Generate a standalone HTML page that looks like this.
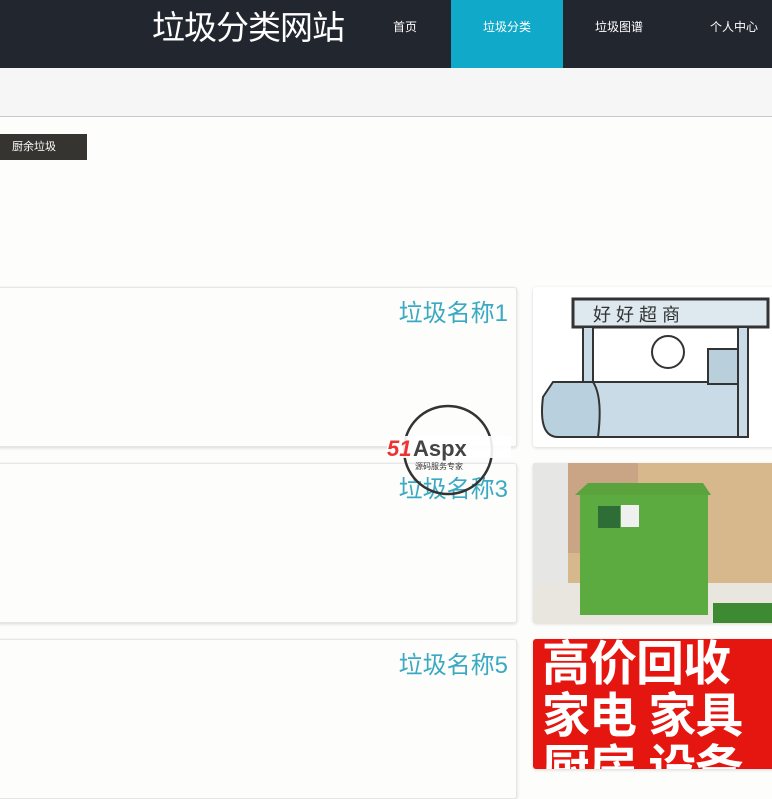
<!DOCTYPE html>
<html><head><meta charset="utf-8"><style>
*{margin:0;padding:0;box-sizing:border-box}
body{width:772px;height:763px;overflow:hidden;background:#fdfdfc;font-family:"Liberation Sans","Noto Sans CJK SC",sans-serif;position:relative}
.hd{position:absolute;left:0;top:0;width:772px;height:68px;background:#22262e}
.t{position:absolute;left:152px;top:6px;color:#fff;font-size:33px;line-height:44px;letter-spacing:-1px}
.n{position:absolute;top:0;height:68px;line-height:54px;color:#fff;font-size:12px}
.act{left:451px;width:112px;background:#10a9c9;text-align:center}
.band{position:absolute;left:0;top:68px;width:772px;height:49px;background:#f6f6f6;border-bottom:1px solid #c8c8c8}
.btn{position:absolute;left:0;top:134px;width:87px;height:26px;background:#353431;color:#fff;font-size:11px;line-height:26px;padding-left:12px}
.card{position:absolute;left:-10px;width:527px;height:160px;background:#fdfdfc;border:1px solid #e6e6e6;box-shadow:0 1px 3px rgba(0,0,0,.15);border-radius:3px}
.card span{position:absolute;right:8px;top:5px;color:#3aa9c2;font-size:24px}
.img{position:absolute;left:533px;width:245px;height:160px;border-radius:3px;overflow:hidden;box-shadow:0 1px 3px rgba(0,0,0,.15)}
.red{background:#e5150f;color:#fff;font-weight:bold;font-size:48px;line-height:52px;padding:0 0 0 9px;white-space:nowrap;letter-spacing:-1px}
</style></head><body>
<div class="hd">
<div class="t">垃圾分类网站</div>
<div class="n" style="left:393px">首页</div>
<div class="n act">垃圾分类</div>
<div class="n" style="left:595px">垃圾图谱</div>
<div class="n" style="left:710px">个人中心</div>
</div>
<div class="band"></div>
<div class="btn">厨余垃圾</div>
<div class="card" style="top:287px"><span>垃圾名称1</span></div>
<div class="card" style="top:463px"><span>垃圾名称3</span></div>
<div class="card" style="top:639px"><span>垃圾名称5</span></div>
<div class="img" style="top:287px;background:#fff">
<svg width="245" height="160" viewBox="0 0 245 160">
<rect x="40" y="12" width="195" height="28" fill="#dde8ef" stroke="#333" stroke-width="3"/>
<text x="60" y="34" font-size="18" fill="#333">好 好 超 商</text>
<rect x="50" y="40" width="10" height="100" fill="#c9dbe6" stroke="#333" stroke-width="2"/>
<rect x="205" y="40" width="10" height="110" fill="#c9dbe6" stroke="#333" stroke-width="2"/>
<rect x="60" y="95" width="145" height="55" fill="#c9dbe6" stroke="#333" stroke-width="2"/>
<circle cx="135" cy="65" r="16" fill="#fff" stroke="#333" stroke-width="2"/>
<rect x="175" y="62" width="30" height="35" fill="#b9cfdc" stroke="#333" stroke-width="2"/>
<path d="M10 110 Q5 150 25 150 L65 150 Q70 110 60 95 L20 95 Z" fill="#b9d0de" stroke="#333" stroke-width="2"/>
</svg></div>
<div class="img" style="top:463px;background:#d7b88c">
<svg width="245" height="160" viewBox="0 0 245 160">
<rect x="0" y="0" width="35" height="160" fill="#e6e6e4"/>
<rect x="35" y="0" width="70" height="90" fill="#c9a585"/>
<rect x="0" y="120" width="245" height="40" fill="#e9e6df"/>
<rect x="180" y="140" width="65" height="20" fill="#3d8a32"/>
<path d="M42 32 L55 20 L170 20 L178 32 Z" fill="#5aa33d"/>
<rect x="47" y="32" width="128" height="120" fill="#5cab41"/>
<rect x="65" y="43" width="22" height="22" fill="#2e6e36"/>
<rect x="88" y="42" width="18" height="22" fill="#f0f0f0"/>
</svg></div>
<div class="img red" style="top:639px;height:130px">高价回收<br>家电 家具<br>厨房 设备</div>
<svg style="position:absolute;left:385px;top:400px" width="130" height="100" viewBox="0 0 130 100">
<circle cx="63" cy="50" r="44" fill="none" stroke="#333" stroke-width="2.5"/>
<rect x="2" y="36" width="124" height="22" fill="#fff" opacity=".9"/>
<text x="2" y="56" font-size="22" font-weight="bold" font-style="italic" fill="#e33">51</text>
<text x="28" y="56" font-size="22" font-weight="bold" fill="#444">Aspx</text>
<text x="30" y="69" font-size="8" fill="#333">源码服务专家</text>
</svg>
</body></html>
